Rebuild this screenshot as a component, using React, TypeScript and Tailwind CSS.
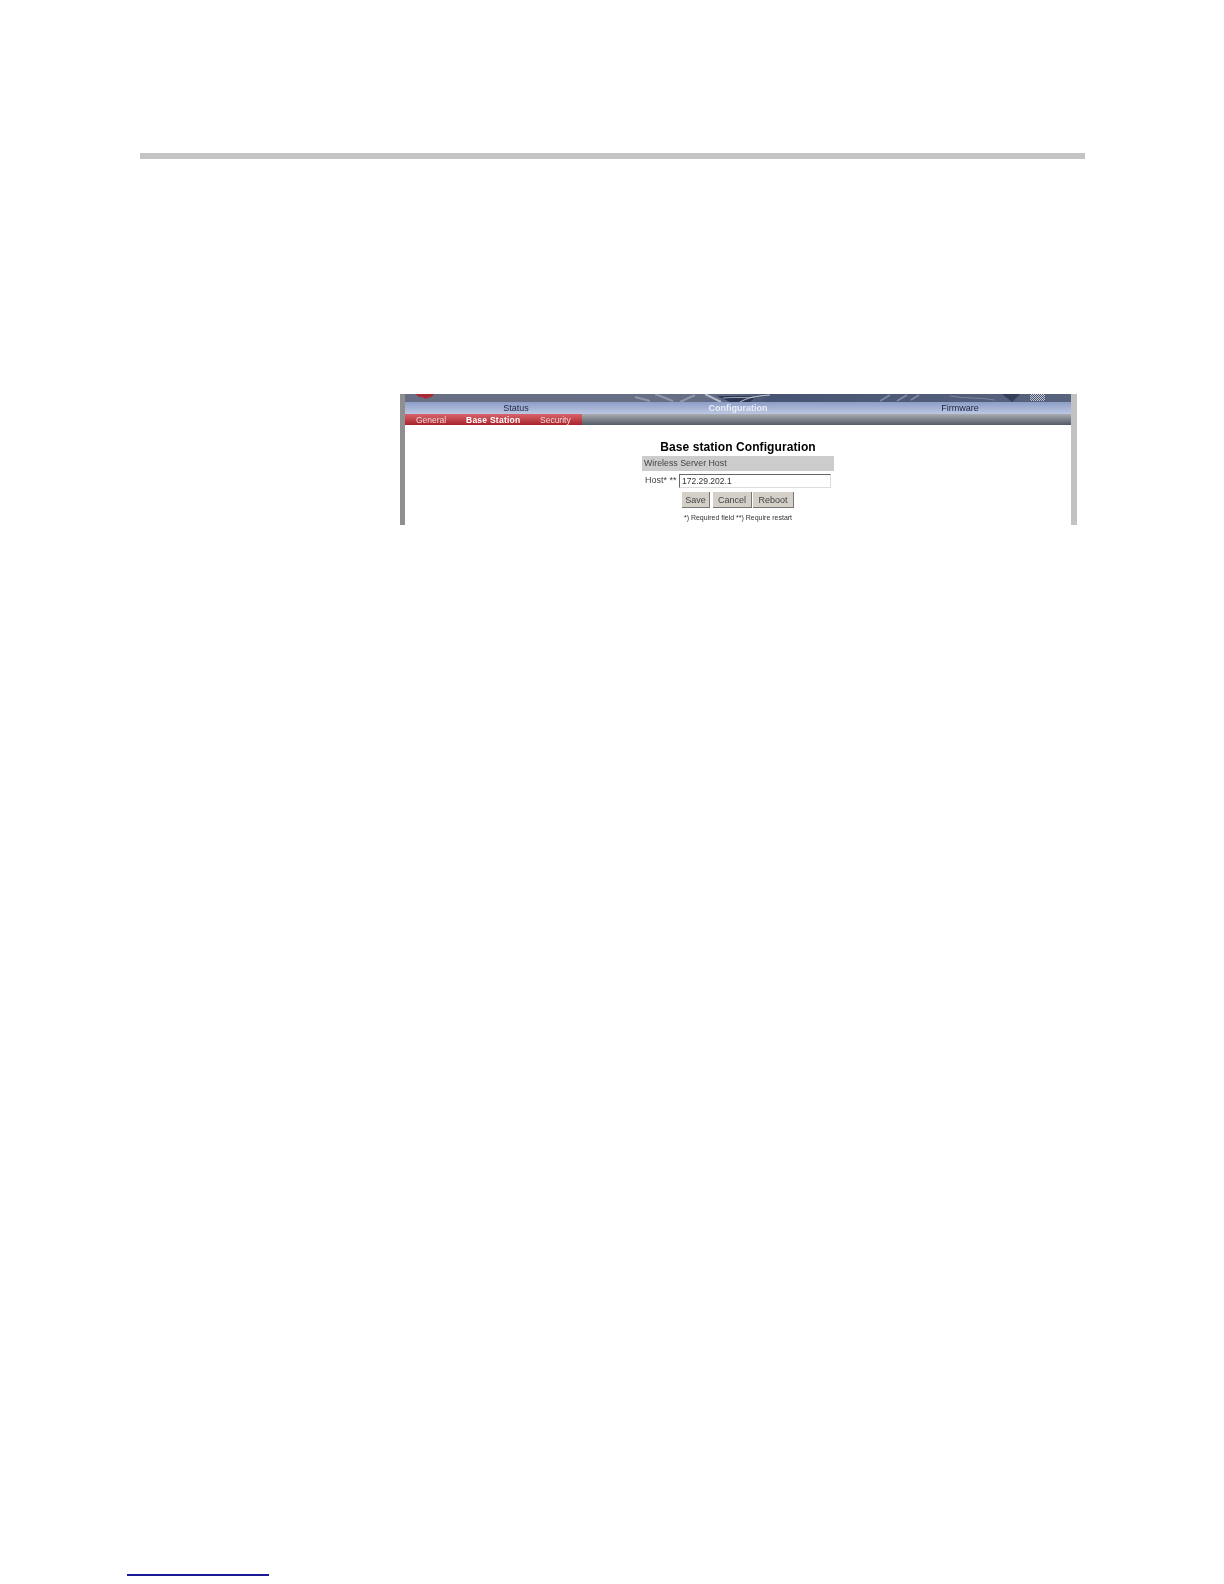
const TOP_NAV = [
  {label: "Status", className: "text-[#1c2440]"},
  {label: "Configuration", className: "font-bold text-[#e8edf8]"},
  {label: "Firmware", className: "text-[#1c2440]"},
];

const HeaderArt = () => (
  <svg viewBox="0 0 666 8" className="block h-2 w-full">
    <defs>
      <pattern id="dither" width="2" height="2" patternUnits="userSpaceOnUse">
        <rect width="2" height="2" fill="#4a5570" />
        <rect width="1" height="1" fill="#c4c9d4" />
        <rect x="1" y="1" width="1" height="1" fill="#c4c9d4" />
      </pattern>
      <linearGradient id="sky" x1="0" x2="1" y1="0" y2="0">
        <stop offset="0" stopColor="#686f84" />
        <stop offset="0.45" stopColor="#666e86" />
        <stop offset="0.55" stopColor="#465473" />
        <stop offset="1" stopColor="#58637e" />
      </linearGradient>
    </defs>
    <rect width="666" height="8" fill="url(#sky)" />
    <path d="M230 3L245 7M250 0L268 7M275 8L290 1" stroke="#8f97a8" strokeWidth="2" fill="none" />
    <path d="M300 0L316 8" stroke="#b4bac6" strokeWidth="2" fill="none" />
    <path d="M312 2H352L345 8H325Z" fill="#2c3650" />
    <path d="M318 4C328 3 340 4 350 3" stroke="#9aa2b4" strokeWidth="1" fill="none" />
    <path d="M335 8C342 4 350 2 365 1" stroke="#c2c7d2" strokeWidth="1" fill="none" />
    <path d="M475 7L485 1M492 7L502 1M506 6L514 1" stroke="#7f889e" strokeWidth="2" fill="none" />
    <path d="M545 2C560 5 575 3 590 6" stroke="#7b849a" strokeWidth="1" fill="none" />
    <path d="M597 0H615L607 8Z" fill="#333e59" />
    <rect x="625" y="0" width="15" height="7" fill="url(#dither)" />
    <path d="M11 0H29C28 2 26 4 24 3C23 5 19 5 18 3C15 4 12 2 11 0Z" fill="#a82a35" />
  </svg>
);

const FormButton = ({label, className}: {label: string; className: string}) => (
  <button className={`h-4 border-r border-b border-[#777] bg-[#d4d0c8] text-[9px] leading-4 text-[#444] ${className}`}>
    {label}
  </button>
);

export default function App() {
  return (
    <div className="min-h-[1584px] bg-white pt-[153px] font-['Liberation_Sans',Arial,sans-serif]">
      <div className="ml-[140px] h-[6px] w-[945px] bg-[#c4c4c4]" />

      <div className="mt-[235px] ml-[400px] flex h-[131px] w-[677px] overflow-hidden blur-[0.35px]">
        <div className="w-[5px] bg-[#8f8f8f]" />
        <div className="flex w-[666px] flex-col">
          <HeaderArt />
          <div className="grid h-3 grid-cols-3 bg-gradient-to-b from-[#8d9dc6] to-[#bcc7e2] text-center text-[9px] leading-3">
            {TOP_NAV.map(({label, className}) => (
              <span key={label} className={className}>
                {label}
              </span>
            ))}
          </div>
          <div className="flex h-[11px] bg-gradient-to-b from-[#a9adb0] to-[#555a68]">
            <div className="flex w-[177px] bg-gradient-to-b from-[#d9636b] to-[#a81f2b] pl-[11px] text-[8.5px] leading-[12px] text-[#f0d8d8]">
              <span className="w-[50px]">General</span>
              <span className="w-[74px] font-bold tracking-[0.25px] text-white">Base Station</span>
              <span>Security</span>
            </div>
          </div>

          <div className="flex flex-1 flex-col items-center bg-white pt-[15px]">
            <h1 className="text-[12px] leading-[15px] font-bold tracking-[0.08px] text-black">
              Base station Configuration
            </h1>
            <div className="mt-[1px] h-[15px] w-[192px] bg-[#cccccc] pl-[2px] text-[8.8px] leading-[15px] text-[#444]">
              Wireless Server Host
            </div>
            <div className="mt-[3px] flex h-[14px] w-[192px] text-[9px] leading-[12px] text-[#444]">
              <span className="w-[37px] pl-[3px]">Host* **</span>
              <div className="h-[14px] w-[152px] border border-[#666] border-r-[#ddd] border-b-[#ddd] bg-white pl-[2px] text-[8.5px] leading-[12px] text-[#333]">
                172.29.202.1
              </div>
            </div>
            <div className="mt-[4px] flex">
              <FormButton label="Save" className="mr-[3px] w-[28px]" />
              <FormButton label="Cancel" className="mr-[1px] w-[39px]" />
              <FormButton label="Reboot" className="w-[41px]" />
            </div>
            <p className="mt-[5px] text-[7px] leading-[10px] text-[#333]">*) Required field **) Require restart</p>
          </div>
        </div>
        <div className="w-[6px] bg-[#c2c2c2]" />
      </div>

      <div className="mt-[1049px] ml-[127px] h-[2px] w-[142px] bg-[#1a1a96]" />
    </div>
  );
}
